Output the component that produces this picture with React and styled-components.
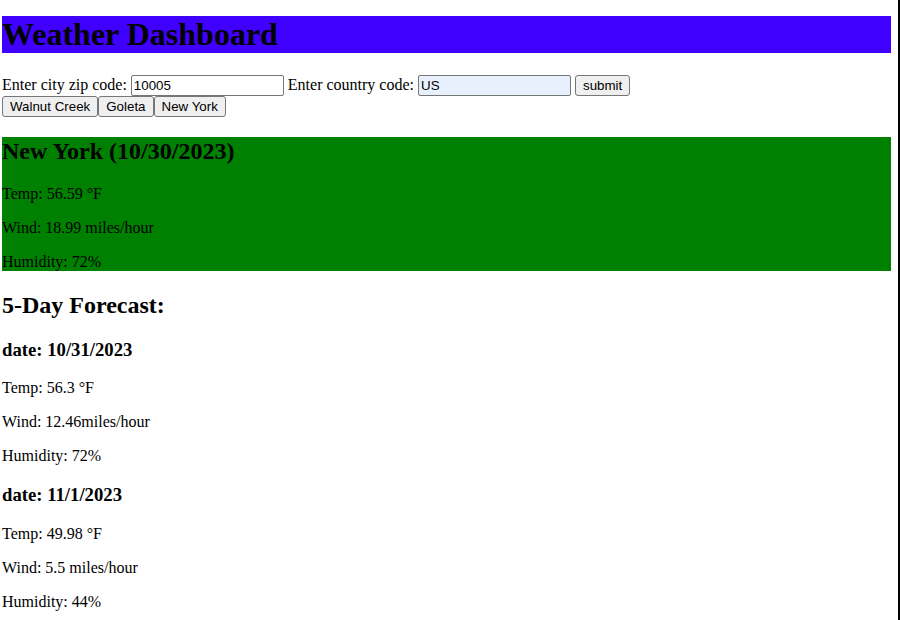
import React from "react";
import styled, { createGlobalStyle } from "styled-components";

const GlobalStyle = createGlobalStyle`
  html, body { height: 100%; }
  body {
    margin: 0;
    overflow: hidden;
    box-sizing: border-box;
    border-right: 2px solid #000;
    background: #fff;
    color: #000;
    font-family: "Liberation Serif", "Times New Roman", serif;
    font-size: 16px;
  }
`;

const Page = styled.div`
  padding: 16px 7px 0 2px;
`;

const Title = styled.h1`
  margin: 0 0 22px;
  font-size: 32px;
  font-weight: bold;
  background: #4000ff;
`;

const SearchForm = styled.form`
  margin: 0;
  line-height: normal;
`;

const TextInput = styled.input`
  box-sizing: border-box;
  width: 153px;
  height: 21px;
  padding: 1px 2px;
  border: 1px solid #767676;
  border-radius: 2px;
  font-family: "Liberation Sans", Arial, sans-serif;
  font-size: 13.33px;
  color: #000;
  background: ${(p) => (p.$autofill ? "#e8f0fe" : "#fff")};
  vertical-align: baseline;
`;

const Button = styled.button`
  box-sizing: border-box;
  height: 21px;
  margin: 0;
  padding: 1px 7px;
  border: 1px solid #767676;
  border-radius: 3px;
  background: #efefef;
  color: #000;
  font-family: "Liberation Sans", Arial, sans-serif;
  font-size: 13.33px;
`;

const CityButtons = styled.div`
  display: flex;
`;

const CityButton = styled(Button)`
  height: 21px;
`;

const Current = styled.section`
  background: #008000;
`;

const SectionTitle = styled.h2`
  margin: 19.92px 0;
  font-size: 24px;
  line-height: 28px;
  font-weight: bold;
`;

const DayTitle = styled.h3`
  margin: 18.72px 0;
  font-size: 18.72px;
  font-weight: bold;
`;

const Stat = styled.p`
  margin: 16px 0;
`;

const forecast = [
  { date: "10/31/2023", temp: "56.3", wind: "12.46miles/hour", humidity: "72" },
  { date: "11/1/2023", temp: "49.98", wind: "5.5 miles/hour", humidity: "44" },
];

export default function App() {
  return (
    <>
      <GlobalStyle />
      <Page>
        <Title>Weather Dashboard</Title>
        <SearchForm onSubmit={(e) => e.preventDefault()}>
          Enter city zip code: <TextInput defaultValue="10005" /> Enter country code:{" "}
          <TextInput $autofill defaultValue="US" /> <Button type="submit">submit</Button>
        </SearchForm>
        <CityButtons>
          <CityButton>Walnut Creek</CityButton>
          <CityButton>Goleta</CityButton>
          <CityButton>New York</CityButton>
        </CityButtons>
        <Current>
          <SectionTitle>New York (10/30/2023)</SectionTitle>
          <Stat>Temp: 56.59 °F</Stat>
          <Stat>Wind: 18.99 miles/hour</Stat>
          <Stat>Humidity: 72%</Stat>
        </Current>
        <SectionTitle>5-Day Forecast:</SectionTitle>
        {forecast.map((d) => (
          <div key={d.date}>
            <DayTitle>date: {d.date}</DayTitle>
            <Stat>Temp: {d.temp} °F</Stat>
            <Stat>Wind: {d.wind}</Stat>
            <Stat>Humidity: {d.humidity}%</Stat>
          </div>
        ))}
      </Page>
    </>
  );
}
